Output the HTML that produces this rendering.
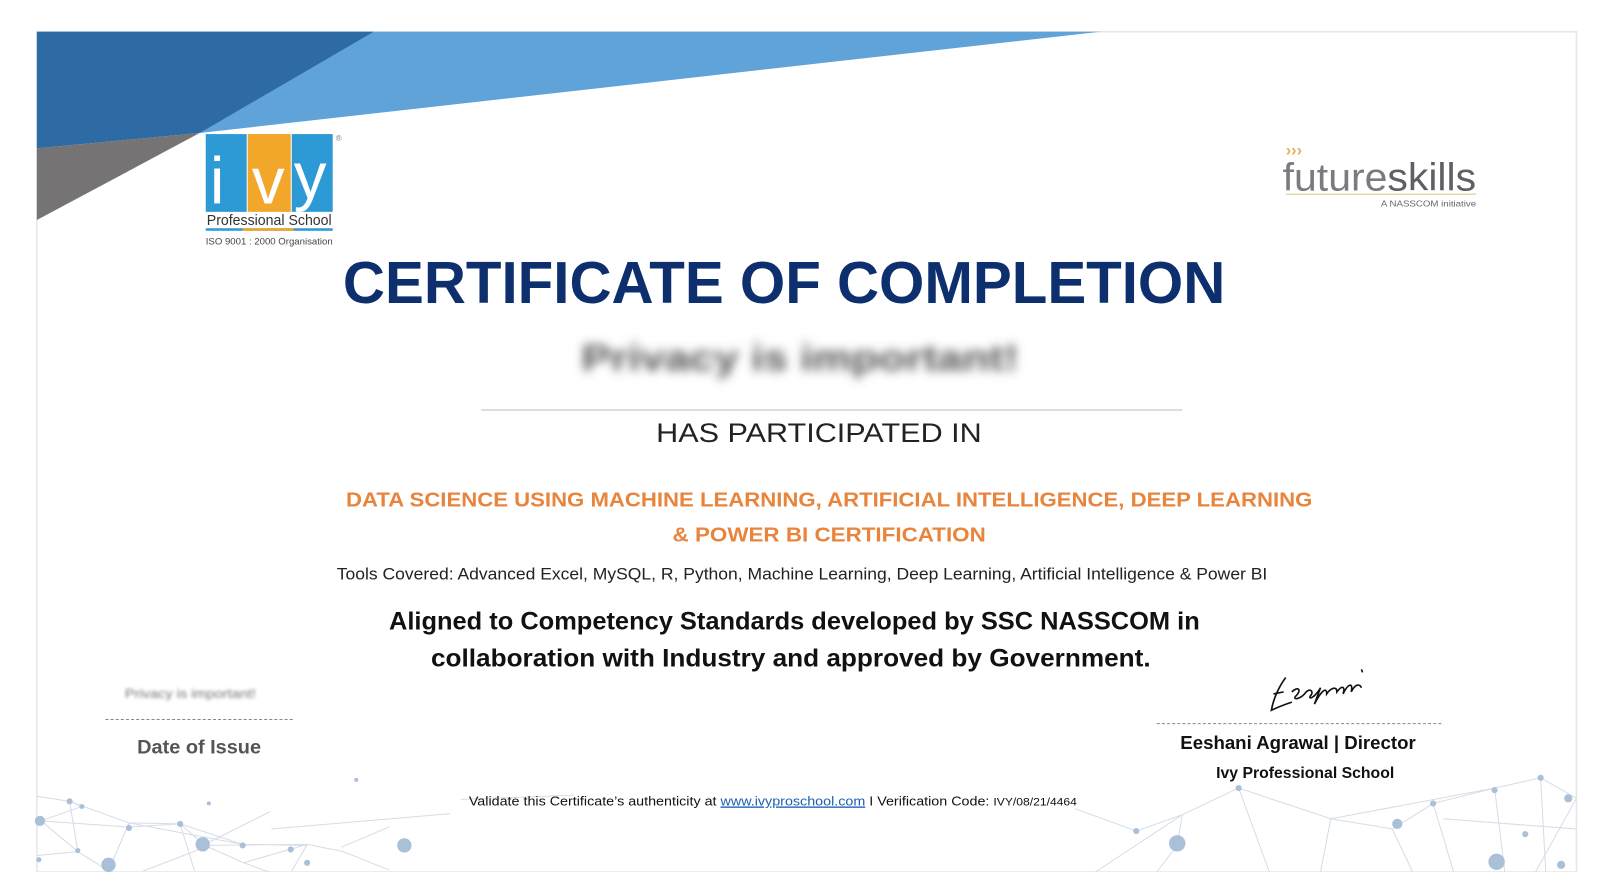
<!DOCTYPE html>
<html><head><meta charset="utf-8"><style>
html,body{margin:0;padding:0;background:#fff;width:1600px;height:872px;overflow:hidden}
svg{display:block}
text{font-family:"Liberation Sans",sans-serif}
</style></head><body>
<svg width="1600" height="872" viewBox="0 0 1563 852" preserveAspectRatio="none" xmlns="http://www.w3.org/2000/svg">
<defs><filter id="b" x="-10%" y="-50%" width="120%" height="200%"><feGaussianBlur stdDeviation="5"/></filter>
<filter id="b2"><feGaussianBlur stdDeviation="1.5"/></filter></defs>
<rect x="36" y="31" width="1504" height="821" fill="#fff" stroke="#e6e6e6" stroke-width="1.5"/>
<polygon points="36,31 1075,31 195,130" fill="#5fa3d9"/>
<polygon points="36,31 365,31 195,130 36,145" fill="#2e6aa3"/>
<polygon points="36,145 195,130 36,215" fill="#767374"/>
<g stroke="#d5dde6" stroke-width="1" fill="none">
<path d="M36,778 L68,783 L80,788 L40,802 L125,808 L176,805 L200,826 L238,843 L300,825 L335,832 L380,850 M68,783 L126,804 L176,805 L237,825 L300,826 M40,802 L76,832 L106,851 M68,783 L76,832 M126,804 L106,851 M176,805 L190,851 M126,804 L237,825 M205,826 L140,851 M264,793 L198,826 M200,826 L300,825 L285,851 M238,843 L263,852 M36,836 L76,832 M333,828 L380,808 M265,810 L440,795 M450,781 L560,777"/>
<path d="M1110,812 L1155,796 L1210,770 L1300,800 L1360,810 L1400,785 L1460,770 L1505,760 L1540,780 M1155,796 L1150,826 L1130,852 M1210,770 L1240,852 M1300,800 L1290,852 M1360,810 L1380,852 M1400,785 L1420,852 M1460,770 L1470,852 M1505,760 L1510,852 M1540,780 L1500,852 M1070,852 L1155,796 M1300,800 L1460,770 M1110,812 L1050,790 M1410,800 L1540,810"/>
</g>
<g fill="#a9c0d8">
<circle cx="39" cy="802" r="5"/><circle cx="68" cy="783" r="3"/><circle cx="80" cy="788" r="2.5"/><circle cx="126" cy="809" r="3"/><circle cx="176" cy="805" r="3"/><circle cx="198" cy="825" r="7"/><circle cx="237" cy="826" r="3"/><circle cx="284" cy="830" r="3"/><circle cx="300" cy="843" r="3"/><circle cx="106" cy="845" r="7"/><circle cx="76" cy="831" r="2.5"/><circle cx="38" cy="840" r="2.5"/><circle cx="348" cy="762" r="2"/>
<circle cx="395" cy="826" r="7"/><circle cx="204" cy="785" r="2"/>
<circle cx="1150" cy="824" r="8"/><circle cx="1210" cy="770" r="3"/><circle cx="1365" cy="805" r="5"/><circle cx="1400" cy="785" r="3"/><circle cx="1460" cy="772" r="3"/><circle cx="1505" cy="760" r="3"/><circle cx="1532" cy="780" r="4"/><circle cx="1462" cy="842" r="8"/><circle cx="1490" cy="815" r="3"/><circle cx="1110" cy="812" r="3"/><circle cx="1525" cy="845" r="4"/>
</g>
<rect x="201" y="131" width="40" height="76" fill="#2d9ad6"/>
<rect x="242" y="131" width="42" height="76" fill="#f2a62a"/>
<rect x="285" y="131" width="40" height="76" fill="#2d9ad6"/>
<text x="205" y="199" font-family="Liberation Serif" font-size="64" fill="#fff">i</text>
<text x="246" y="199" font-family="Liberation Serif" font-size="64" fill="#fff">v</text>
<text x="287" y="194" font-family="Liberation Serif" font-size="64" fill="#fff">y</text>
<text x="328" y="138" font-size="8" fill="#888">®</text>
<text x="202" y="220" font-size="14" fill="#333" textLength="122" lengthAdjust="spacingAndGlyphs">Professional School</text>
<rect x="201" y="223" width="124" height="2.5" fill="#2d9ad6"/><rect x="237" y="223" width="50" height="2.5" fill="#f2a62a"/>
<text x="201" y="239" font-size="9" fill="#444" textLength="124" lengthAdjust="spacingAndGlyphs">ISO 9001 : 2000 Organisation</text>
<text x="1253" y="186" font-family="DejaVu Sans" font-size="38" fill="#7a7b80" textLength="189" lengthAdjust="spacingAndGlyphs">future<tspan fill="#5f6066">skills</tspan></text>
<text x="1256" y="152" font-size="16" fill="#e4b15a" font-weight="bold">›››</text>
<rect x="1256" y="189" width="186" height="1.5" fill="#e6d9b0"/>
<text x="1349" y="202" font-size="8" fill="#666" textLength="93" lengthAdjust="spacingAndGlyphs">A NASSCOM initiative</text>
<text x="335" y="296" font-size="58" font-weight="bold" fill="#0d2f6e" textLength="862" lengthAdjust="spacingAndGlyphs">CERTIFICATE OF COMPLETION</text>
<text x="568" y="362" font-size="36" font-weight="bold" fill="#555" filter="url(#b)" textLength="427" lengthAdjust="spacingAndGlyphs">Privacy is important!</text>
<rect x="470" y="400" width="685" height="1.2" fill="#c8c8c8"/>
<text x="641" y="432" font-size="26" fill="#222" textLength="318" lengthAdjust="spacingAndGlyphs">HAS PARTICIPATED IN</text>
<text x="338" y="495" font-size="20" font-weight="bold" fill="#e8843c" textLength="944" lengthAdjust="spacingAndGlyphs">DATA SCIENCE USING MACHINE LEARNING, ARTIFICIAL INTELLIGENCE, DEEP LEARNING</text>
<text x="657" y="529" font-size="20" font-weight="bold" fill="#e8843c" textLength="306" lengthAdjust="spacingAndGlyphs">&amp; POWER BI CERTIFICATION</text>
<text x="329" y="566" font-size="16" fill="#222" textLength="909" lengthAdjust="spacingAndGlyphs">Tools Covered: Advanced Excel, MySQL, R, Python, Machine Learning, Deep Learning, Artificial Intelligence &amp; Power BI</text>
<text x="380" y="615" font-size="24" font-weight="bold" fill="#111" textLength="792" lengthAdjust="spacingAndGlyphs">Aligned to Competency Standards developed by SSC NASSCOM in</text>
<text x="421" y="651" font-size="24" font-weight="bold" fill="#111" textLength="703" lengthAdjust="spacingAndGlyphs">collaboration with Industry and approved by Government.</text>
<text x="122" y="682" font-size="13" fill="#777" filter="url(#b2)" textLength="128" lengthAdjust="spacingAndGlyphs">Privacy is important!</text>
<line x1="103" y1="703" x2="286" y2="703" stroke="#888" stroke-dasharray="3,2"/>
<text x="134" y="736" font-size="19" font-weight="bold" fill="#555" textLength="121" lengthAdjust="spacingAndGlyphs">Date of Issue</text>
<path d="M1256,662 C1250,670 1244,682 1242,694 C1250,690 1256,688 1262,686 M1244,678 L1254,676 M1262,676 C1268,670 1272,674 1266,680 C1262,684 1270,684 1276,676 C1280,672 1284,676 1280,680 C1278,684 1284,682 1290,672 L1284,688 C1290,676 1296,670 1296,678 C1300,672 1306,670 1306,676 C1312,668 1314,672 1312,678 C1318,666 1322,668 1320,676 C1324,668 1328,668 1330,672 M1330,654 L1331,657" stroke="#111" stroke-width="1.6" fill="none"/>
<line x1="1130" y1="707" x2="1410" y2="707" stroke="#888" stroke-dasharray="3,2"/>
<text x="1153" y="732" font-size="18" font-weight="bold" fill="#111" textLength="230" lengthAdjust="spacingAndGlyphs">Eeshani Agrawal | Director</text>
<text x="1188" y="760" font-size="15" font-weight="bold" fill="#111" textLength="174" lengthAdjust="spacingAndGlyphs">Ivy Professional School</text>
<text x="458" y="787" font-size="13" fill="#111" textLength="594" lengthAdjust="spacingAndGlyphs">Validate this Certificate’s authenticity at <tspan fill="#1a5fb4" text-decoration="underline">www.ivyproschool.com</tspan> I Verification Code:   <tspan font-size="11">IVY/08/21/4464</tspan></text>
</svg>
</body></html>
